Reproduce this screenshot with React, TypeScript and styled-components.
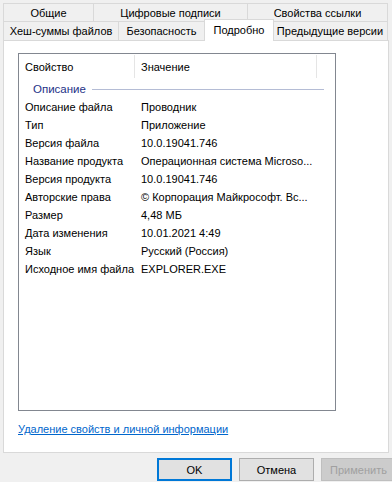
import styled, { createGlobalStyle } from "styled-components";

const GlobalStyle = createGlobalStyle`
    html, body {
        margin: 0;
        padding: 0;
        background: #f0f0f0;
    }
    body {
        font-family: "Segoe UI", "Liberation Sans", Arial, sans-serif;
        font-size: 11px;
        color: #000;
    }
`;

const tabRows = [
    [
        { label: "Общие", width: 91 },
        { label: "Цифровые подписи", width: 154 },
        { label: "Свойства ссылки", width: 140 },
    ],
    [
        { label: "Хеш-суммы файлов", width: 116 },
        { label: "Безопасность", width: 86 },
        { label: "Подробно", width: 68, active: true },
        { label: "Предыдущие версии", width: 115 },
    ],
];

const details = [
    { label: "Описание файла", value: "Проводник" },
    { label: "Тип", value: "Приложение" },
    { label: "Версия файла", value: "10.0.19041.746" },
    { label: "Название продукта", value: "Операционная система Microso..." },
    { label: "Версия продукта", value: "10.0.19041.746" },
    { label: "Авторские права", value: "© Корпорация Майкрософт. Вс..." },
    { label: "Размер", value: "4,48 МБ" },
    { label: "Дата изменения", value: "10.01.2021 4:49" },
    { label: "Язык", value: "Русский (Россия)" },
    { label: "Исходное имя файла", value: "EXPLORER.EXE" },
];

function App() {
    return (
        <>
            <GlobalStyle />
            <Dialog>
                <Tabs>
                    {tabRows.map((row, i) => (
                        <TabRow key={i}>
                            {row.map((tab) => (
                                <Tab key={tab.label} $width={tab.width} $active={!!("active" in tab && tab.active)}>
                                    {tab.label}
                                </Tab>
                            ))}
                        </TabRow>
                    ))}
                </Tabs>

                <Panel>
                    <ListBox>
                        <Header>
                            <HeaderCell $width={116}>Свойство</HeaderCell>
                            <HeaderCell $width={182}>Значение</HeaderCell>
                        </Header>
                        <Group>
                            <span>Описание</span>
                            <GroupLine />
                        </Group>
                        {details.map((row) => (
                            <Row key={row.label}>
                                <Cell $width={116}>{row.label}</Cell>
                                <Cell $width={182}>{row.value}</Cell>
                            </Row>
                        ))}
                    </ListBox>
                    <RemoveLink href="#">Удаление свойств и личной информации</RemoveLink>
                </Panel>

                <Buttons>
                    <Button $primary>OK</Button>
                    <Button>Отмена</Button>
                    <Button disabled>Применить</Button>
                </Buttons>
            </Dialog>
        </>
    );
}

const Dialog = styled.div`
    width: 392px;
    height: 482px;
    overflow: hidden;
    background: #f0f0f0;
    display: flex;
    flex-direction: column;
`;

const Tabs = styled.div`
    padding: 3px 3px 0 3px;
    display: flex;
    flex-direction: column;
`;

const TabRow = styled.div`
    display: flex;
    height: 18px;
    &:last-child {
        height: 19px;
    }
`;

const Tab = styled.div<{ $width: number; $active?: boolean }>`
    box-sizing: border-box;
    width: ${({ $width }) => $width}px;
    display: flex;
    align-items: center;
    justify-content: center;
    border: 1px solid #d9d9d9;
    border-left: none;
    border-bottom: none;
    background: #f0f0f0;
    white-space: nowrap;
    &:first-child {
        border-left: 1px solid #d9d9d9;
    }
    ${({ $active }) =>
        $active &&
        `
        position: relative;
        z-index: 1;
        background: #fff;
        margin: -2px -1px -1px -1px;
        width: 70px;
        border-left: 1px solid #d9d9d9;
        padding-bottom: 2px;
    `}
`;

const Panel = styled.div`
    box-sizing: border-box;
    margin: 0 3px;
    height: 413px;
    background: #fff;
    border: 1px solid #d9d9d9;
    padding: 12px 0 0 14px;
    display: flex;
    flex-direction: column;
`;

const ListBox = styled.div`
    box-sizing: border-box;
    width: 318px;
    height: 358px;
    border: 1px solid #828790;
    background: #fff;
`;

const Header = styled.div`
    display: flex;
    height: 26px;
`;

const HeaderCell = styled.div<{ $width: number }>`
    box-sizing: border-box;
    width: ${({ $width }) => $width}px;
    padding-left: 6px;
    display: flex;
    align-items: center;
    border-right: 1px solid #e5e5e5;
    margin: 1px 0 2px 0;
`;

const Group = styled.div`
    display: flex;
    align-items: center;
    height: 18px;
    padding: 0 11px 0 14px;
    color: #1e3287;
    font-size: 11.5px;
`;

const GroupLine = styled.div`
    flex: 1;
    height: 1px;
    margin-left: 6px;
    background: #b4bcd5;
`;

const Row = styled.div`
    display: flex;
    height: 18px;
    align-items: center;
`;

const Cell = styled.div<{ $width: number }>`
    box-sizing: border-box;
    width: ${({ $width }) => $width}px;
    padding-left: 6px;
    white-space: nowrap;
    overflow: hidden;
`;

const RemoveLink = styled.a`
    margin-top: 12px;
    color: #0066cc;
    text-decoration: underline;
    align-self: flex-start;
`;

const Buttons = styled.div`
    display: flex;
    gap: 7px;
    padding: 5px 0 0 157px;
`;

const Button = styled.button<{ $primary?: boolean }>`
    box-sizing: border-box;
    flex: none;
    width: 75px;
    height: 23px;
    font: inherit;
    color: #000;
    background: #e1e1e1;
    border: 1px solid ${({ $primary }) => ($primary ? "#0078d7" : "#adadad")};
    box-shadow: ${({ $primary }) => ($primary ? "inset 0 0 0 1px #0078d7" : "none")};
    padding: 0;
    &:disabled {
        color: #a0a0a0;
        background: #cccccc;
        border-color: #bfbfbf;
    }
`;

export default App;
